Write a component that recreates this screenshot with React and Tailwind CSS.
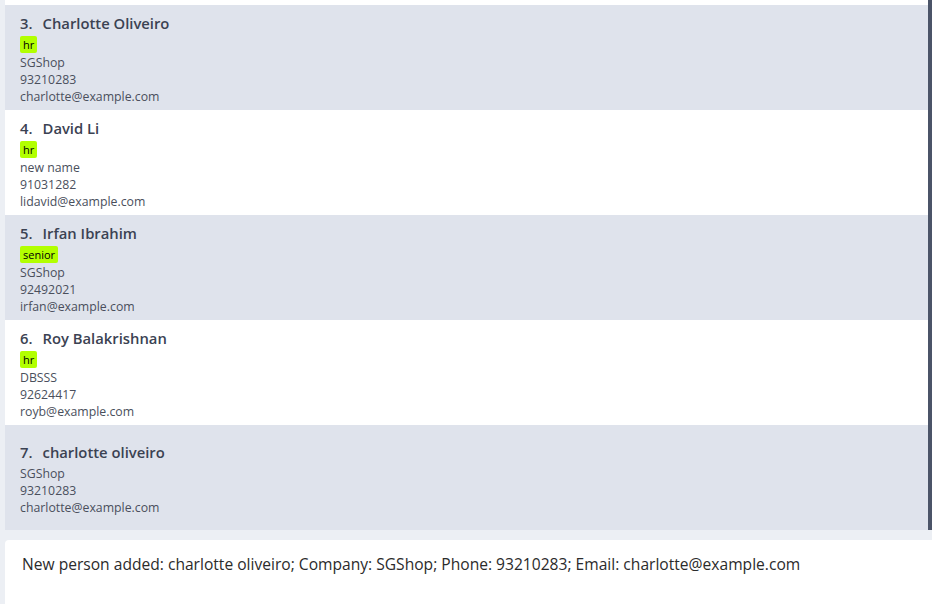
const people = [
  { n: 3, name: "Charlotte Oliveiro", tag: "hr", company: "SGShop", phone: "93210283", email: "charlotte@example.com" },
  { n: 4, name: "David Li", tag: "hr", company: "new name", phone: "91031282", email: "lidavid@example.com" },
  { n: 5, name: "Irfan Ibrahim", tag: "senior", company: "SGShop", phone: "92492021", email: "irfan@example.com" },
  { n: 6, name: "Roy Balakrishnan", tag: "hr", company: "DBSSS", phone: "92624417", email: "royb@example.com" },
  { n: 7, name: "charlotte oliveiro", tag: null, company: "SGShop", phone: "93210283", email: "charlotte@example.com" },
];

function Card({ p, alt }) {
  return (
    <div
      className={
        "h-[105px] flex flex-col pl-[15px] " +
        (alt ? "bg-[#dfe3ec] " : "bg-white ") +
        (p.tag ? "pt-[8px]" : "pt-[17px]")
      }
    >
      <div className="h-[20px] leading-[20px] text-[14.8px] font-semibold text-[#3b4252] flex">
        <span>{p.n}.</span>
        <span className="ml-[10px]">{p.name}</span>
      </div>
      {p.tag ? (
        <div className="mt-[3px] mb-[1px] flex">
          <span className="h-[17px] leading-[17px] px-[3px] text-[11px] text-black bg-[#b2ff00] rounded-[2px]">
            {p.tag}
          </span>
        </div>
      ) : (
        <div className="h-[3px]" />
      )}
      <div className="text-[12.3px] leading-[17px] text-[#4a4f5c]">
        <div>{p.company}</div>
        <div>{p.phone}</div>
        <div>{p.email}</div>
      </div>
    </div>
  );
}

export default function App() {
  return (
    <div
      className="w-[932px] h-[604px] bg-[#eceff4] flex flex-col overflow-hidden"
      style={{ fontFamily: '"Open Sans", "Noto Sans", sans-serif' }}
    >
      <div className="h-[530px] flex">
        <div className="flex-1 pl-[5px] flex flex-col">
          <div className="h-[5px] bg-white" />
          {people.map((p, i) => (
            <Card key={p.n} p={p} alt={i % 2 === 0} />
          ))}
        </div>
        <div className="w-[4px] bg-[#4b5468]" />
      </div>
      <div className="mt-[10px] ml-[5px] flex-1 bg-white rounded-tl-[4px] pl-[17px] pt-[13px]">
        <div className="text-[15.6px] leading-[22px] text-[#2b2b2b]">
          New person added: charlotte oliveiro; Company: SGShop; Phone: 93210283; Email: charlotte@example.com
        </div>
      </div>
    </div>
  );
}
